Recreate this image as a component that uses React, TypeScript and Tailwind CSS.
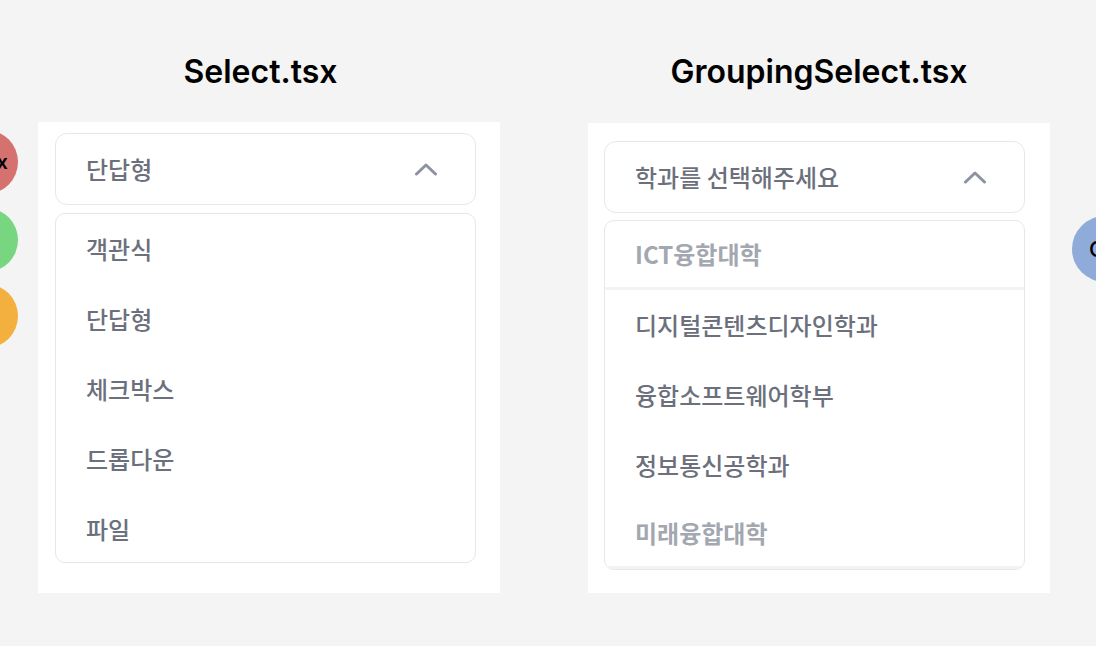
const kr = "font-['Noto_Sans_CJK_KR','Noto_Sans',sans-serif]";

function Chevron() {
  return (
    <svg width="24" height="14" viewBox="0 0 24 14" fill="none" className="text-[#8b92a0]">
      <polyline points="2.5,12 12,3 21.5,12" stroke="currentColor" strokeWidth="3" strokeLinecap="round" strokeLinejoin="round" />
    </svg>
  );
}

function Trigger({ label }: { label: string }) {
  return (
    <div className="h-[72px] flex items-center justify-between pl-[30px] pr-[37px] border border-[#e6e7eb] rounded-[12px] bg-white">
      <span className={`${kr} text-[24px] font-medium text-[#6c707c]`}>{label}</span>
      <Chevron />
    </div>
  );
}

function Item({ label }: { label: string }) {
  return (
    <div className={`h-[70px] shrink-0 flex items-center pl-[30px] ${kr} text-[24px] font-medium text-[#6c707c]`}>
      {label}
    </div>
  );
}

function Group({ label }: { label: string }) {
  return (
    <div className={`h-[69px] shrink-0 flex items-center pl-[30px] border-b-[3px] border-[#f2f3f5] ${kr} text-[24px] font-semibold text-[#a3a7b0]`}>
      {label}
    </div>
  );
}

export default function App() {
  const options = ["객관식", "단답형", "체크박스", "드롭다운", "파일"];
  const groups = [
    { name: "ICT융합대학", items: ["디지털콘텐츠디자인학과", "융합소프트웨어학부", "정보통신공학과"] },
    { name: "미래융합대학", items: ["창의융합인재학부", "사회복지학과", "부동산학과"] },
  ];

  return (
    <div className="relative w-full h-[646px] overflow-hidden bg-[#f4f4f4]">
      {/* canvas nodes peeking in from the edges */}
      <div className="absolute left-[-46px] top-[130px] w-[64px] h-[64px] rounded-full bg-[#d5716f] flex items-center justify-end pr-[10px]">
        <span className="font-['Inter',sans-serif] font-semibold text-[20px] text-black">x</span>
      </div>
      <div className="absolute left-[-46px] top-[208px] w-[64px] h-[64px] rounded-full bg-[#77d67f]" />
      <div className="absolute left-[-46px] top-[284px] w-[64px] h-[64px] rounded-full bg-[#f4b03e]" />
      <div className="absolute left-[1072px] top-[216px] w-[66px] h-[66px] rounded-full bg-[#8fabd9] flex items-center pl-[17px]">
        <span className="font-['Inter',sans-serif] font-medium text-[22px] text-black">C</span>
      </div>

      <div className="flex pl-[38px] pt-[50px] gap-[88px]">
        <div className="w-[462px] flex flex-col">
          <h2 className="h-[44px] pr-[17px] flex items-center justify-center font-['Inter',sans-serif] font-semibold text-[32px] text-black">
            Select.tsx
          </h2>
          <div className="mt-[28px] bg-white pl-[17px] pr-[24px] pt-[11px] pb-[30px] flex flex-col gap-[8px]">
            <Trigger label="단답형" />
            <div className="h-[350px] overflow-hidden border border-[#e6e7eb] rounded-[10px] flex flex-col">
              {options.map((o) => (
                <Item key={o} label={o} />
              ))}
            </div>
          </div>
        </div>

        <div className="w-[462px] flex flex-col">
          <h2 className="h-[44px] flex items-center justify-center font-['Inter',sans-serif] font-semibold text-[32px] text-black">
            GroupingSelect.tsx
          </h2>
          <div className="mt-[29px] bg-white pl-[16px] pr-[25px] pt-[18px] pb-[23px] flex flex-col gap-[7px]">
            <Trigger label="학과를 선택해주세요" />
            <div className="h-[350px] overflow-hidden border border-[#e6e7eb] rounded-[10px] flex flex-col">
              {groups.map((g) => (
                <div key={g.name} className="flex flex-col">
                  <Group label={g.name} />
                  {g.items.map((i) => (
                    <Item key={i} label={i} />
                  ))}
                </div>
              ))}
            </div>
          </div>
        </div>
      </div>
    </div>
  );
}
